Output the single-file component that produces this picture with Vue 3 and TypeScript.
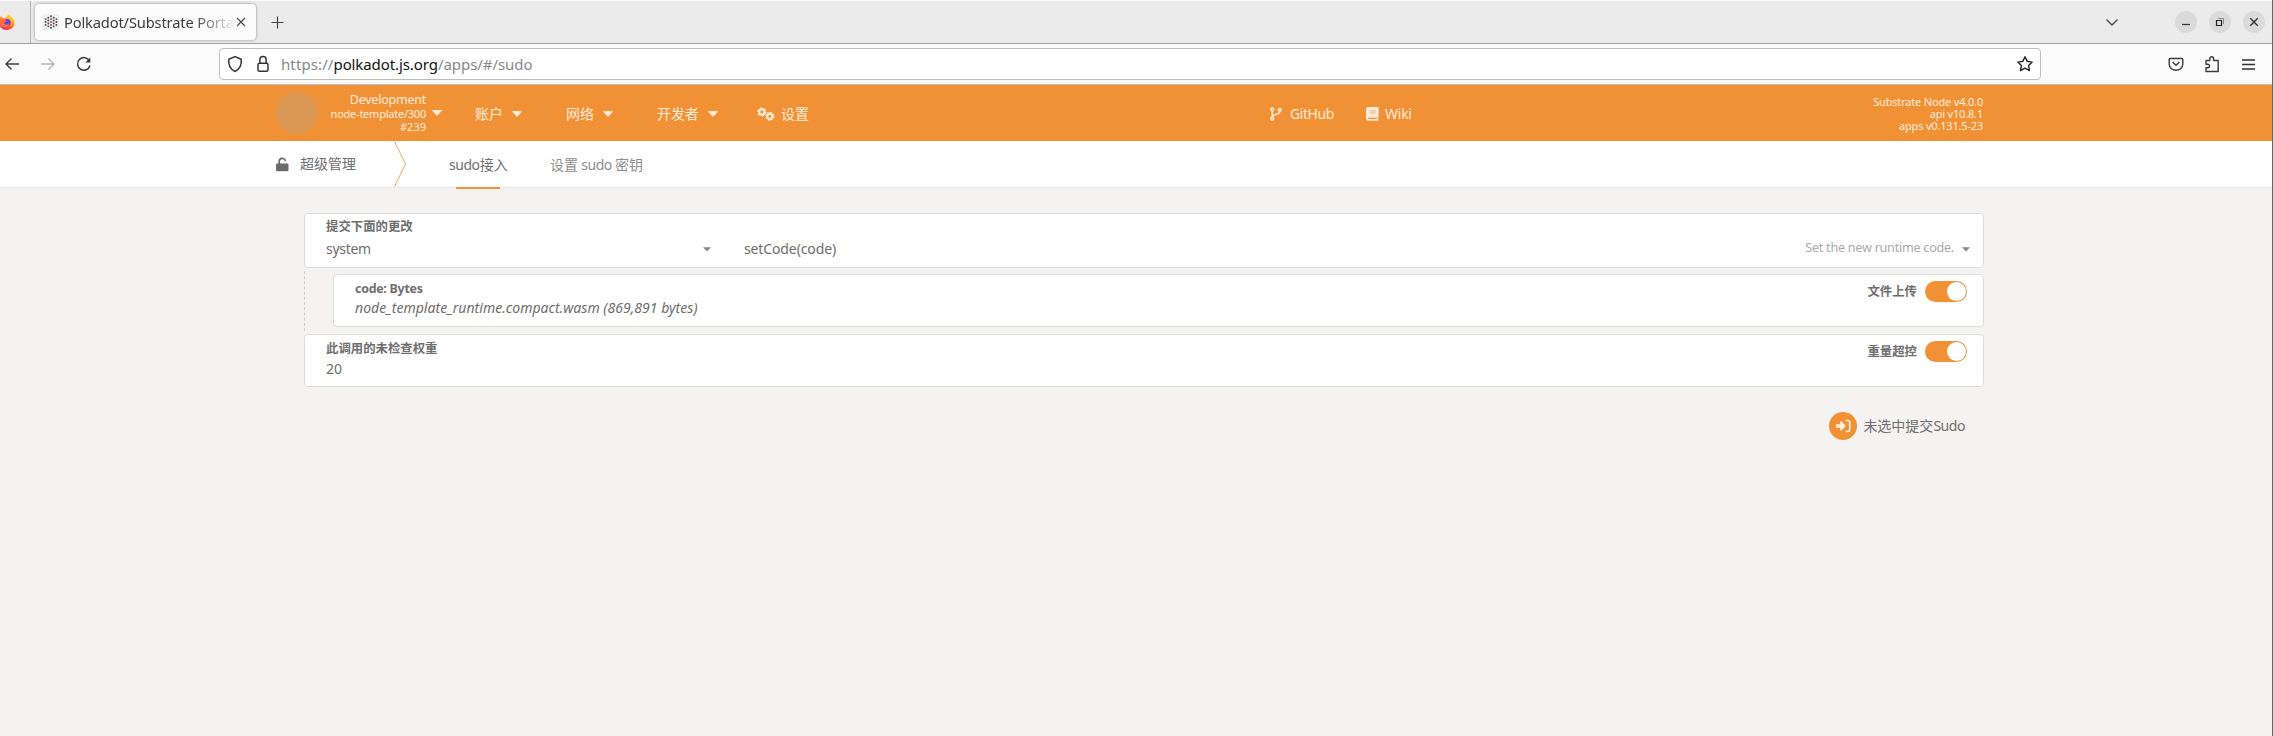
<script setup lang="ts">
interface MenuItem { label: string; cls: string }
const menu: MenuItem[] = [
  { label: '账户', cls: 'accounts' },
  { label: '网络', cls: 'network' },
  { label: '开发者', cls: 'developer' },
]
const versions: string[] = ['Substrate Node v4.0.0', 'api v10.8.1', 'apps v0.131.5-23']
const dots: { x: number; y: number; pink: boolean }[] = []
for (let c = -2; c <= 2; c++) {
  const n = 5 - Math.abs(c)
  for (let r = 0; r < n; r++) {
    dots.push({ x: 8 + c * 2.7, y: 8 + (r - (n - 1) / 2) * 2.9, pink: c === 0 && r === 2 })
  }
}
</script>

<template>
  <div class="window">
    <div class="tabbar">
      <div class="pinned">
        <svg width="16" height="18" viewBox="0 0 16 18">
          <defs>
            <linearGradient id="flame" x1="0.8" y1="0" x2="0.2" y2="1">
              <stop offset="0" stop-color="#fff04a" /><stop offset="0.4" stop-color="#ffa02c" />
              <stop offset="0.75" stop-color="#ff4a48" /><stop offset="1" stop-color="#f4117e" />
            </linearGradient>
          </defs>
          <path d="M-1 6 1 3 3 5 6 4.500C7 2.500 8 1.500 9.500 1 10 3 13 4.500 14.300 7.500 16 12 12.500 17 7 17 2 17-1 14-1 9z" fill="url(#flame)" />
          <circle cx="7" cy="9.500" r="3.600" fill="#6b3fe0" />
          <path d="M0 7c2-2 4-1 5 0l2 1c-1 1-3 1-3 2 1 2 4 2 5 0 1 5-8 6-9 1z" fill="#ff7139" />
        </svg>
      </div>
      <div class="tab">
        <svg class="favicon" width="16" height="16" viewBox="0 0 16 16">
          <rect width="16" height="16" fill="#f0f0f0" />
          <circle v-for="(d, i) in dots" :key="i" :cx="d.x" :cy="d.y" r="0.95" :fill="d.pink ? '#e6007a' : '#444'" />
        </svg>
        <span class="tab-title">Polkadot/Substrate Porta</span>
        <svg class="close" width="10" height="10" viewBox="0 0 10 10"><path d="M1 1l8 8M9 1L1 9" stroke="#444" stroke-width="1.1" /></svg>
      </div>
      <svg class="plus" width="13" height="13" viewBox="0 0 13 13"><path d="M6.500 .5v12M.5 6.500h12" stroke="#444" stroke-width="1.200" /></svg>
      <svg class="chevron" width="14" height="9" viewBox="0 0 14 9" fill="none"><path d="M1.500 1.500 7 7l5.500-5.500" stroke="#4a4a4a" stroke-width="1.400" /></svg>
      <div class="winbtns">
        <span class="winbtn"><svg width="22" height="22" viewBox="0 0 22 22"><path d="M7 13.500h8" stroke="#333" stroke-width="1.200" /></svg></span>
        <span class="winbtn"><svg width="22" height="22" viewBox="0 0 22 22" fill="none"><path d="M7.500 9.500h5v5h-5z" stroke="#222" stroke-width="1.200" /><path d="M9 7.500h5.500V13" stroke="#8a8a8a" /></svg></span>
        <span class="winbtn"><svg width="22" height="22" viewBox="0 0 22 22"><path d="M7.300 7.300l7.400 7.400M14.700 7.300l-7.400 7.400" stroke="#333" stroke-width="1.400" /></svg></span>
      </div>
    </div>

    <div class="toolbar">
      <svg class="back" width="16" height="16" viewBox="0 0 16 16" fill="none" stroke="#3c3c3c" stroke-width="1.400"><path d="M15 8H2M7.500 2.500 2 8l5.500 5.500" /></svg>
      <svg class="forward" width="16" height="16" viewBox="0 0 16 16" fill="none" stroke="#b5b5b5" stroke-width="1.400"><path d="M1 8h13M8.500 2.500 14 8l-5.500 5.500" /></svg>
      <svg class="reload" width="16" height="16" viewBox="0 0 16 16" fill="none" stroke="#3c3c3c" stroke-width="1.500"><path d="M13.500 5A6.300 6.300 0 1 0 14 9.500" /><path d="M14.300 1.500v5h-5z" fill="#3c3c3c" stroke="none" /></svg>
      <div class="urlbar">
        <svg class="shield" width="16" height="18" viewBox="0 0 16 18" fill="none"><path d="M8 1.600 14.200 4.200C14.800 10 12.500 14.500 8 16.500 3.500 14.500 1.200 10 1.800 4.200z" stroke="#333" stroke-width="1.500" stroke-linejoin="round" /></svg>
        <svg class="padlock" width="12" height="18" viewBox="0 0 12 18" fill="none" stroke="#333" stroke-width="1.500"><rect x="1" y="8.300" width="10" height="7.900" rx="1.500" /><path d="M2.900 8V4.500a3.100 3.100 0 0 1 6.200 0V8" /></svg>
        <span class="url"><span class="scheme">https://</span><span class="host">polkadot.js.org</span><span class="path">/apps/#/sudo</span></span>
        <svg class="star" width="18" height="18" viewBox="0 0 18 18" fill="none"><path d="M9 1.800l2.200 4.600 5 .7-3.600 3.500.9 5L9 13.200l-4.500 2.400.9-5L1.800 7.100l5-.7z" stroke="#222" stroke-width="1.400" stroke-linejoin="round" /></svg>
      </div>
      <svg class="pocket" width="16" height="16" viewBox="0 0 16 16" fill="none" stroke="#3c3c3c" stroke-width="1.400"><path d="M2.200 2.500h11.600q1 0 1 1V8A6.800 6.300 0 0 1 1.200 8V3.500q0-1 1-1z" /><path d="M4.500 6 8 9.300 11.500 6" /></svg>
      <svg class="puzzle" width="16" height="18" viewBox="0 0 16 18" fill="none" stroke="#3c3c3c" stroke-width="1.400" stroke-linejoin="round"><path d="M2 5.500h3.800V3.600a1.900 1.900 0 0 1 3.800 0v1.900h4.600v11H2v-3.700h1.700a1.800 1.800 0 0 0 0-3.600H2z" /></svg>
      <svg class="menu" width="13" height="11" viewBox="0 0 13 11"><path d="M0 1h13M0 5.500h13M0 10h13" stroke="#2e2e2e" stroke-width="1.300" /></svg>
    </div>

    <header class="header">
      <span class="avatar"></span>
      <div class="chain"><div class="name">Development</div><div>node-template/300</div><div class="block">#239</div></div>
      <svg class="caret chain-caret" width="10" height="6" viewBox="0 0 10 6"><path d="M.8 0h8.400q.9.300.3 1L5.700 5.200q-.7.700-1.400 0L.5 1Q0 .300.800 0z" /></svg>
      <div v-for="m in menu" :key="m.cls" class="item" :class="m.cls">
        <span>{{ m.label }}</span>
        <svg class="caret" width="10" height="6" viewBox="0 0 10 6"><path d="M.8 0h8.400q.9.300.3 1L5.700 5.200q-.7.700-1.400 0L.5 1Q0 .300.800 0z" /></svg>
      </div>
      <div class="item settings">
        <svg width="18" height="14" viewBox="0 0 18 14" fill="none" stroke="#fcebd9">
          <circle cx="4.800" cy="4.900" r="2.700" stroke-width="2.100" /><circle cx="4.800" cy="4.900" r="4" stroke-width="1.300" stroke-dasharray="2.100 2.089" />
          <circle cx="12.900" cy="9.300" r="2.600" stroke-width="2" /><circle cx="12.900" cy="9.300" r="3.900" stroke-width="1.300" stroke-dasharray="1.600 1.463" />
        </svg>
        <span>设置</span>
      </div>
      <div class="item github">
        <svg width="12" height="14" viewBox="0 0 12 14" fill="none" stroke="#fcebd9" stroke-width="1.500"><circle cx="2.300" cy="2.300" r="1.400" /><circle cx="2.300" cy="11.700" r="1.400" /><circle cx="9.700" cy="2.800" r="1.400" /><path d="M2.300 4v6.500M9.700 4.500c0 3.500-5.500 2-7.200 5" /></svg>
        <span>GitHub</span>
      </div>
      <div class="item wiki">
        <svg width="13" height="14" viewBox="0 0 13 14"><path d="M2.500 0H11.800q.8 0 .8.800V9.500q0 .500-.5.800v2.100q.500.200.5.700t-.7.600H2.500Q0 13.700 0 11.200V2.500Q0 0 2.500 0z" fill="#fcebd9" /><path d="M3.600 3.900h6.200M3.600 6h6.200" stroke="#f3b478" stroke-width="1" /><path d="M2.300 11.400H11" stroke="#f19135" stroke-width="1.400" /></svg>
        <span>Wiki</span>
      </div>
      <div class="versions"><div v-for="v in versions" :key="v">{{ v }}</div></div>
    </header>

    <nav class="subnav">
      <svg class="unlock" width="13" height="15" viewBox="0 0 13 15"><rect x="0" y="6.500" width="12.500" height="7.800" rx="1.300" fill="#6b6b6b" /><path d="M3.200 7V4.400a3.100 3.100 0 0 1 6-1.100" fill="none" stroke="#6b6b6b" stroke-width="1.700" stroke-linecap="round" /></svg>
      <span class="section">超级管理</span>
      <svg class="divider" width="13" height="46" viewBox="0 0 13 46" fill="none"><path d="M.5 .5 11.500 23 .5 45.500" stroke="#f3a558" stroke-width="1" /></svg>
      <span class="subtab active"><i>sudo</i>接入</span>
      <span class="subtab key">设置<i> sudo </i>密钥</span>
    </nav>

    <main class="content">
      <section class="card call">
        <label>提交下面的更改</label>
        <div class="selects">
          <div class="select pallet"><span>system</span><svg width="8" height="5" viewBox="0 0 8 5"><path d="M0 .3h8L4 4.600z" fill="#888" /></svg></div>
          <div class="select method"><span>setCode(code)</span><span class="hint">Set the new runtime code.</span><svg width="8" height="5" viewBox="0 0 8 5"><path d="M0 .3h8L4 4.600z" fill="#888" /></svg></div>
        </div>
      </section>
      <div class="params">
        <section class="card param">
          <div><label class="latin">code: Bytes</label><div class="file">node_template_runtime.compact.wasm (869,891 bytes)</div></div>
          <div class="switch"><label>文件上传</label><span class="toggle"><span class="knob"></span></span></div>
        </section>
      </div>
      <section class="card weight">
        <div><label>此调用的未检查权重</label><div class="value">20</div></div>
        <div class="switch"><label>重量超控</label><span class="toggle"><span class="knob"></span></span></div>
      </section>
      <div class="actions">
        <span class="round"><svg width="15" height="14" viewBox="0 0 15 14"><path d="M.3 5.300h4V2.600q.2-.8.900-.3l4.300 4.200q.4.500 0 1L5.200 11.700q-.7.500-.9-.3V8.700h-4q-.3 0-.3-.4V5.700q0-.4.300-.4z" fill="#fff0e0" /><path d="M9.500 1.500h2.200q2 0 2 2v7q0 2-2 2H9.500" fill="none" stroke="#fff0e0" stroke-width="1.600" /></svg></span>
        <span>未选中提交<i>Sudo</i></span>
      </div>
    </main>
  </div>
</template>

<style>
body { background: #f4f3f2; }
</style>

<style scoped>
* { box-sizing: border-box; }
svg { display: block; flex: none; }
i { font-style: normal; letter-spacing: -0.45px; }
.window { width: 2273px; height: 736px; background: #f4f3f2; border-right: 1px solid #666; overflow: hidden; font: 14px/20px "Noto Sans", "Noto Sans CJK SC", sans-serif; color: #6e6e6e; white-space: nowrap; }

.tabbar { height: 44px; background: #ebebeb; border-top: 1px solid #fafafa; border-bottom: 1px solid #a0a0a0; display: flex; align-items: center; }
.pinned { width: 31px; height: 42px; border-right: 1px solid #b2b2b2; padding-top: 12px; }
.tab { width: 221px; height: 36px; margin: 0 0 0 4px; padding: 0 0 0 8px; background: #fbfbfb; border-radius: 4px; box-shadow: 0 0 3px #888; display: flex; align-items: center; }
.tab-title { width: 173px; margin-left: 5px; font-size: 14.7px; letter-spacing: -0.16px; color: #3b3b3b; -webkit-mask-image: linear-gradient(90deg, #000 75%, transparent 99%); mask-image: linear-gradient(90deg, #000 75%, transparent 99%); }
.close { margin-left: -1px; }
.plus { margin-left: 15px; }
.chevron { margin-left: 1821px; }
.winbtns { display: flex; gap: 12px; margin-left: 56px; }
.winbtn { width: 22px; height: 22px; border-radius: 50%; background: #dadada; }

.toolbar { height: 41px; background: #fbfbfb; border-bottom: 1px solid #c4c4c4; display: flex; align-items: center; padding-left: 4px; }
.forward { margin-left: 20px; }
.reload { margin-left: 20px; }
.urlbar { width: 1822px; height: 32px; margin-left: 127px; padding: 0 6px 0 7px; background: #fff; border: 1px solid #bdbdbd; border-radius: 4px; display: flex; align-items: center; }
.padlock { margin-left: 14px; }
.url { flex: 1; margin-left: 12px; font-size: 15px; color: #888; display: flex; }
.scheme { width: 52.5px; letter-spacing: 0.1px; }
.host { width: 104.5px; letter-spacing: -0.1px; color: #111; }
.path { letter-spacing: -0.07px; }
.pocket { margin-left: 127px; }
.puzzle { margin-left: 20px; }
.menu { margin-left: 22px; }

.header { height: 56px; background: #f19135; color: #fcebd9; display: flex; align-items: center; padding-left: 276px; }
.avatar { width: 42px; height: 42px; border-radius: 50%; background: #da9653; }
.chain { width: 108px; margin-bottom: 2px; font-size: 11px; line-height: 13px; letter-spacing: -0.23px; text-align: right; }
.chain .name { font-size: 12.5px; line-height: 15px; }
.chain .block { letter-spacing: 0; }
.caret { fill: #fcebd9; }
.chain-caret { margin-left: 6px; }
.item { display: flex; align-items: center; letter-spacing: -0.1px; padding-top: 1px; }
.item .caret { margin-left: 9px; }
.accounts { margin-left: 33px; width: 91px; }
.network { width: 91px; }
.developer { width: 100px; }
.settings span { margin-left: 6px; }
.settings { width: 513px; }
.github { width: 96px; letter-spacing: -0.45px; }
.wiki { letter-spacing: -0.25px; }
.github span { margin-left: 8px; }
.wiki span { margin-left: 6px; }
.versions { width: 200px; margin-left: auto; margin-right: 289px; padding-top: 2px; font-size: 11px; line-height: 12px; letter-spacing: -0.18px; text-align: right; }

.subnav { height: 46px; background: #fff; display: flex; align-items: center; padding-left: 276px; box-shadow: 0 1px 0 #e9e9e8; }
.section { width: 94px; margin-left: 11px; }
.subtab { height: 48px; line-height: 49px; }
.active { position: relative; margin-left: 42px; width: 58px; }
.active::after { content: ""; position: absolute; left: 7px; bottom: -1px; width: 44px; height: 2px; background: #f19135; }
.key { margin-left: 43px; color: #8d8d8d; }

.content { width: 1680px; margin: 26px 0 0 304px; }
.card { background: #fff; border: 1px solid #dcdddd; border-radius: 4px; padding: 0 21px; }
label { display: block; font-size: 12.4px; font-weight: 700; line-height: 16px; }
.call { height: 55px; padding-top: 5px; }
.selects { display: flex; line-height: 20px; margin-top: 3px; }
.select { display: flex; align-items: center; }
.pallet { width: 385px; justify-content: space-between; letter-spacing: -0.3px; }
.method { flex: 1; margin-left: 33px; margin-right: -8px; letter-spacing: -0.12px; }
.hint { margin-left: auto; margin-right: 8px; padding-bottom: 2px; font-size: 12.6px; letter-spacing: -0.25px; color: #aaa; }
.params { padding: 6px 0 7px 29px; position: relative; }
.params::before { content: ""; position: absolute; left: 0; top: 3px; bottom: 3px; border-left: 1px dashed #ccc; }
.param, .weight { height: 53px; padding-top: 6px; display: flex; justify-content: space-between; }
.latin { letter-spacing: -0.25px; }
.file { font-style: italic; letter-spacing: 0.03px; margin-top: 1px; }
.value { margin-top: 2px; letter-spacing: -0.1px; }
.switch { display: flex; height: 21px; align-items: center; margin: 0 -5px 0 0; }
.toggle { width: 42px; height: 21px; margin-left: 8px; background: #f19135; border-radius: 11px; padding: 1px; display: flex; justify-content: flex-end; }
.knob { width: 19px; height: 19px; border-radius: 50%; background: #fff; }
.actions { height: 28px; margin-top: 25px; padding-right: 19px; display: flex; align-items: center; justify-content: flex-end; }
.round { width: 28px; height: 28px; border-radius: 50%; background: #f19135; margin-right: 6px; display: flex; align-items: center; justify-content: center; }
</style>
